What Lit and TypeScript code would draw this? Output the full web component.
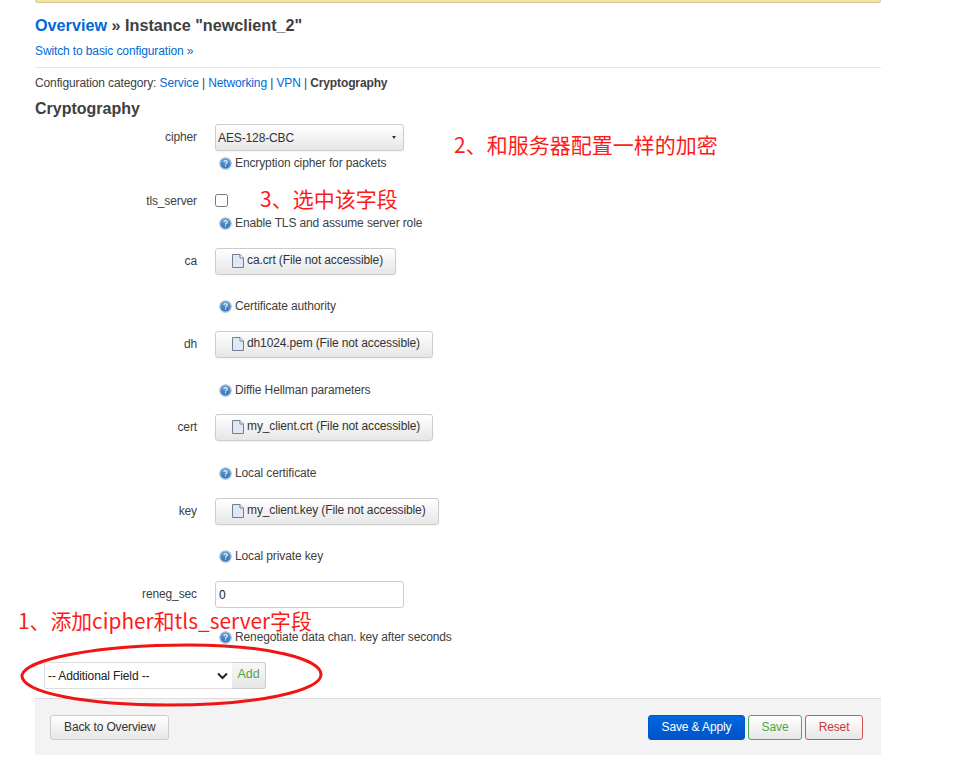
import { LitElement, html, css } from "lit";
import { customElement } from "lit/decorators.js";

const helpIcon = html`<svg class="hi" width="13" height="13" viewBox="0 0 13 13">
  <defs><linearGradient id="hg" x1="0" y1="0" x2="0" y2="1"><stop offset="0" stop-color="#6aa3d8"/><stop offset="1" stop-color="#2a6fb4"/></linearGradient></defs>
  <circle cx="6.5" cy="6.5" r="5.7" fill="url(#hg)" stroke="#a8c3dc" stroke-width="1.2"/>
  <path d="M4.8 5.1C4.9 4.1 5.6 3.6 6.5 3.6c1 0 1.7.6 1.7 1.4 0 1.3-1.7 1.3-1.7 2.6" fill="none" stroke="#e8f1fa" stroke-width="1.2"/>
  <rect x="5.9" y="8.4" width="1.2" height="1.2" fill="#e8f1fa"/>
</svg>`;

const fileIcon = html`<svg class="fi" width="12" height="14" viewBox="0 0 12 14">
  <path d="M.5.5H8L11.5 4V13.5H.5Z" fill="#dfe8f3" stroke="#6d7f96"/>
  <path d="M8 .5V4H11.5" fill="#fff" stroke="#6d7f96"/>
</svg>`;

@customElement("app-root")
export class AppRoot extends LitElement {
  static styles = css`
    :host {
      display: block;
      position: relative;
      width: 963px;
      height: 772px;
      overflow: hidden;
      background: #fff;
      font-family: "Liberation Sans", Arial, sans-serif;
      font-size: 12px;
      letter-spacing: -0.12px;
      color: #404040;
    }
    .page { margin: 0 82px 0 35px; display: flex; flex-direction: column; }
    .notice {
      height: 3px;
      box-sizing: border-box;
      background: #f2e3a8;
      border: 1px solid #d9c98e;
      border-top: 0;
      border-radius: 0 0 3px 3px;
    }
    a { color: #0069d6; text-decoration: none; }
    h2 { margin: 12px 0 0; font-size: 16.2px; letter-spacing: 0; line-height: 20px; font-weight: bold; color: #404040; }
    .switch { margin-top: 8px; line-height: 16px; }
    .sep { margin-top: 8px; border-top: 1px solid #e5e5e5; }
    .cat { margin-top: 7px; line-height: 16px; }
    .cat b { color: #404040; }
    h3 { margin: 8px 0 0; font-size: 16px; letter-spacing: 0; line-height: 20px; font-weight: bold; color: #404040; }
    .rows { margin-top: 5px; display: flex; flex-direction: column; }
    .row { display: grid; grid-template-columns: 162px 1fr; column-gap: 18px; padding-bottom: 17px; }
    .label { text-align: right; line-height: 16px; padding-top: 5px; color: #404040; }
    .field { display: flex; flex-direction: column; align-items: flex-start; }
    .select {
      box-sizing: border-box; width: 189px; height: 27px; padding: 0 2px;
      display: flex; align-items: center; justify-content: space-between;
      border: 1px solid #ccc; border-radius: 3px;
      background: linear-gradient(#fff, #e6e6e6); color: #333;
      box-shadow: 0 1px 2px rgba(0,0,0,.05);
    }
    .caret { width: 0; height: 0; margin-right: 5px; border: 2.5px solid transparent; border-top: 3px solid #333; border-bottom: 0; }
    .check { box-sizing: border-box; width: 13px; height: 13px; margin: 6px 0; border: 1px solid #767676; border-radius: 2.5px; background: #fff; }
    .file {
      box-sizing: border-box; height: 27px; padding: 0 12px 4px 16px;
      display: inline-flex; align-items: center; gap: 3px;
      border: 1px solid #ccc; border-radius: 3px;
      background: linear-gradient(#fff, #e6e6e6); color: #333;
      box-shadow: 0 1px 2px rgba(0,0,0,.05);
    }
    .fi { margin-top: 3px; }
    .input {
      box-sizing: border-box; width: 189px; height: 27px; padding: 0 3px;
      display: flex; align-items: center;
      border: 1px solid #ccc; border-radius: 3px; background: #fff; color: #222;
    }
    .help { display: flex; align-items: center; gap: 3.5px; margin-left: 3.5px; margin-bottom: -1px; padding-top: 1px; height: 17px; line-height: 17px; color: #404040; }
    .hi { flex: none; margin-top: -1px; }
    .m4 { margin-top: 3px; }
    .m2 { margin-top: 1px; }
    .m22 { margin-top: 22px; }
    .m20 { margin-top: 20px; }
    .low .help { margin-top: 23px; }
    .low { padding-bottom: 16px; }
    .low.extra { padding-bottom: 17px; }
    .last { padding-bottom: 17px; }
    .add { display: flex; margin: 0 0 9px 9px; height: 27px; }
    .add-select {
      box-sizing: border-box; width: 188px; padding: 0 4px 0 3px;
      display: flex; align-items: center; justify-content: space-between;
      border: 1px solid #ddd; border-right: 0; border-radius: 3px 0 0 3px;
      background: #fff; color: #222;
    }
    .add-btn {
      box-sizing: border-box; width: 34px; padding-bottom: 3px; font-size: 12.5px; letter-spacing: 0;
      display: flex; align-items: center; justify-content: center;
      border: 1px solid #ccc; border-left: 0; border-radius: 0 3px 3px 0;
      background: linear-gradient(#f8f8f8, #e6e6e6); color: #4ba84b;
    }
    .actions {
      box-sizing: border-box; height: 57px; padding: 16px 18px 16px 15px;
      display: flex; align-items: flex-start; gap: 3px;
      background: #f3f3f3; border-top: 1px solid #ddd;
    }
    .btn {
      box-sizing: border-box; height: 25px; padding: 0 13px 2px;
      display: flex; align-items: center; justify-content: center;
      border: 1px solid #ccc; border-radius: 3px;
      background: linear-gradient(#fff, #e6e6e6); color: #333;
    }
    .grow { flex: 1; }
    .apply { width: 97px; padding: 0 0 2px; background: linear-gradient(#0069e0, #0052c8); border-color: #0058c8; color: #fff; }
    .save { width: 54px; padding: 0 0 2px; border-color: #4cae4c; color: #4ba84b; }
    .reset { width: 58px; padding: 0 0 2px; border-color: #d9534f; color: #c9383c; }
    .note { position: absolute; color: #ff1a1a; font-family: "Noto Sans CJK SC", sans-serif; font-size: 21px; letter-spacing: 0; line-height: 30px; white-space: nowrap; }
    .n2 { left: 454px; top: 129px; }
    .n3 { left: 260px; top: 183px; }
    .n1 { left: 18px; top: 605px; font-size: 20.85px; }
    .ring { position: absolute; left: 18px; top: 641px; }
  `;

  private help(cls: string, text: string) {
    return html`<div class="help ${cls}">${helpIcon}<span>${text}</span></div>`;
  }

  private fileRow(label: string, name: string, help: string, cls = "") {
    return html`<div class="row ${cls}">
      <div class="label">${label}</div>
      <div class="field">
        <div class="file">${fileIcon}<span>${name} (File not accessible)</span></div>
        ${this.help("m22", help)}
      </div>
    </div>`;
  }

  render() {
    return html`
      <div class="page">
        <div class="notice"></div>
        <h2><a href="#">Overview</a> » Instance "newclient_2"</h2>
        <div class="switch"><a href="#">Switch to basic configuration »</a></div>
        <div class="sep"></div>
        <div class="cat">Configuration category: <a href="#">Service</a> | <a href="#">Networking</a> | <a href="#">VPN</a> | <b>Cryptography</b></div>
        <h3>Cryptography</h3>
        <div class="rows">
          <div class="row">
            <div class="label">cipher</div>
            <div class="field">
              <div class="select"><span>AES-128-CBC</span><span class="caret"></span></div>
              ${this.help("m4", "Encryption cipher for packets")}
            </div>
          </div>
          <div class="row">
            <div class="label">tls_server</div>
            <div class="field">
              <div class="check"></div>
              ${this.help("m2", "Enable TLS and assume server role")}
            </div>
          </div>
          ${this.fileRow("ca", "ca.crt", "Certificate authority")}
          ${this.fileRow("dh", "dh1024.pem", "Diffie Hellman parameters", "low")}
          ${this.fileRow("cert", "my_client.crt", "Local certificate", "low extra")}
          ${this.fileRow("key", "my_client.key", "Local private key")}
          <div class="row last">
            <div class="label">reneg_sec</div>
            <div class="field">
              <div class="input">0</div>
              ${this.help("m20", "Renegotiate data chan. key after seconds")}
            </div>
          </div>
        </div>
        <div class="add">
          <div class="add-select"><span>-- Additional Field --</span>
            <svg width="11" height="8" viewBox="0 0 11 8"><path d="M1 1.5 5.5 6 10 1.5" fill="none" stroke="#222" stroke-width="2"/></svg>
          </div>
          <div class="add-btn">Add</div>
        </div>
        <div class="actions">
          <div class="btn">Back to Overview</div>
          <div class="grow"></div>
          <div class="btn apply">Save &amp; Apply</div>
          <div class="btn save">Save</div>
          <div class="btn reset">Reset</div>
        </div>
      </div>
      <div class="note n2">2、和服务器配置一样的加密</div>
      <div class="note n3">3、选中该字段</div>
      <div class="note n1">1、添加cipher和tls_server字段</div>
      <svg class="ring" width="310" height="68" viewBox="0 0 310 68">
        <path d="M4 34C8 18 80 4 170 4C250 4 304 18 303 34C302 50 240 64 150 64C70 64 2 52 4 34Z" fill="none" stroke="#f01414" stroke-width="3"/>
      </svg>
    `;
  }
}
